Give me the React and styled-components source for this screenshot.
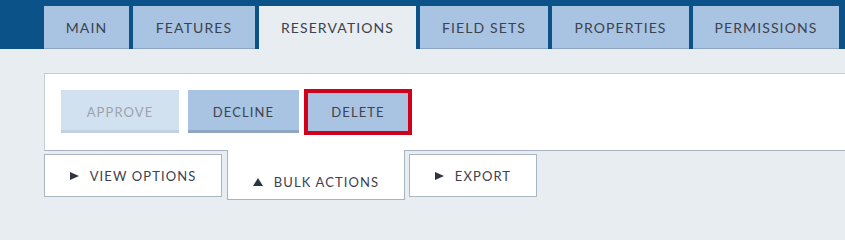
import React from "react";
import styled, { createGlobalStyle, css } from "styled-components";

const Global = createGlobalStyle`
  html, body { margin: 0; padding: 0; background: #e8edf1; }
  body { font-family: Lato, "Liberation Sans", sans-serif; overflow: hidden; }
  * { box-sizing: border-box; }
`;

const Page = styled.div`
  width: 845px;
  height: 216px;
  background: #e8edf1;
  overflow: hidden;
`;

const Header = styled.div`
  background: #0b5288;
  height: 49px;
  padding: 6px 0 0 44px;
  display: flex;
  gap: 4px;
`;

const label = css`
  font-size: 13px;
  letter-spacing: 1.1px;
  text-transform: uppercase;
  color: #3c424e;
  white-space: nowrap;
`;

const TopTab = styled.div`
  ${label}
  font-size: 14px;
  width: ${(p) => p.$w}px;
  height: 43px;
  display: flex;
  align-items: center;
  justify-content: center;
  background: #a9c4e2;
  border-bottom: 1px solid #8ea6c2;
  ${(p) =>
    p.$active &&
    css`
      background: #e8edf1;
      border-bottom: 1px solid #e8edf1;
    `}
`;

const Content = styled.div`
  padding: 24px 0 0 44px;
`;

const Panel = styled.div`
  background: #fff;
  border: 1px solid #c3cdd8;
  border-right: none;
  border-bottom-color: #a7b3c1;
  padding: 16px 16px 17px 16px;
  display: flex;
  align-items: center;
  gap: 9px;
  height: 78px;
`;

const ActionButton = styled.div`
  ${label}
  width: ${(p) => p.$w}px;
  height: 43px;
  display: flex;
  align-items: center;
  justify-content: center;
  background: #a9c4e2;
  border-bottom: 3px solid #8ea6c2;
  padding-top: 3px;
  ${(p) =>
    p.$disabled &&
    css`
      background: #d2e1f0;
      border-bottom-color: #c0d1e3;
      color: #9ba3ad;
    `}
  ${(p) =>
    p.$highlight &&
    css`
      height: 46px;
      border: 4px solid #d0021b;
      padding: 0;
      margin-left: -4px;
    `}
`;

const BottomTabs = styled.div`
  display: flex;
  align-items: flex-start;
  gap: 5px;
`;

const BottomTab = styled.div`
  ${label}
  width: ${(p) => p.$w}px;
  margin-top: 3px;
  height: 43px;
  display: flex;
  align-items: center;
  justify-content: center;
  gap: 11px;
  background: #fff;
  border: 1px solid #a9b5c3;
  ${(p) =>
    p.$active &&
    css`
      margin-top: -1px;
      margin-right: -1px;
      height: 50px;
      border-top: none;
      border-color: #a7b3c1;
      padding-top: 14px;
    `}
`;

const Arrow = styled.span`
  width: 0;
  height: 0;
  flex: none;
  ${(p) =>
    p.$up
      ? css`
          border-left: 5px solid transparent;
          border-right: 5px solid transparent;
          border-bottom: 8px solid #2e3440;
        `
      : css`
          border-top: 4.5px solid transparent;
          border-bottom: 4.5px solid transparent;
          border-left: 9px solid #2e3440;
        `}
`;

const tabs = [
  { label: "Main", w: 85 },
  { label: "Features", w: 122 },
  { label: "Reservations", w: 157, active: true },
  { label: "Field Sets", w: 128 },
  { label: "Properties", w: 137 },
  { label: "Permissions", w: 146 },
];

export default function App() {
  return (
    <Page>
      <Global />
      <Header>
        {tabs.map((t) => (
          <TopTab key={t.label} $w={t.w} $active={t.active}>
            {t.label}
          </TopTab>
        ))}
      </Header>
      <Content>
        <Panel>
          <ActionButton $disabled $w={118}>Approve</ActionButton>
          <ActionButton $w={111}>Decline</ActionButton>
          <ActionButton $highlight $w={108}>Delete</ActionButton>
        </Panel>
        <BottomTabs>
          <BottomTab $w={178}>
            <Arrow />
            View Options
          </BottomTab>
          <BottomTab $active $w={178}>
            <Arrow $up />
            Bulk Actions
          </BottomTab>
          <BottomTab $w={128}>
            <Arrow />
            Export
          </BottomTab>
        </BottomTabs>
      </Content>
    </Page>
  );
}
